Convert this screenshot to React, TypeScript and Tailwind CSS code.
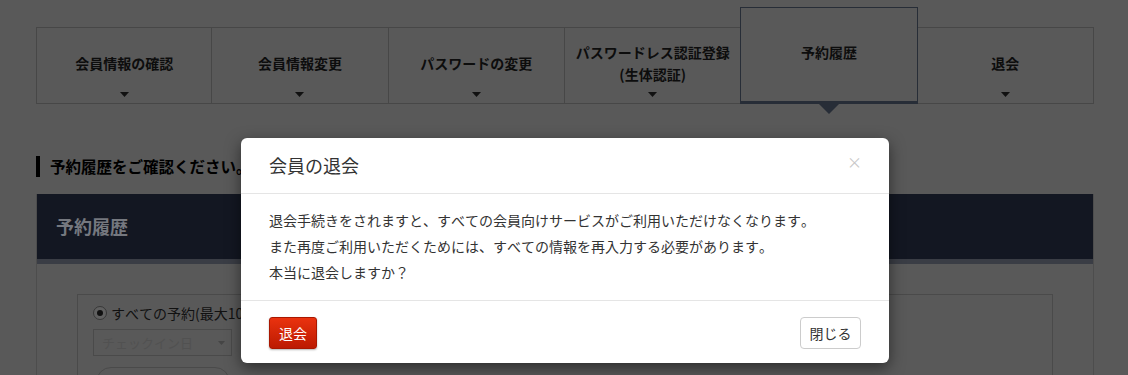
import React from "react";

const tabs = [
  { label: ["会員情報の確認"] },
  { label: ["会員情報変更"] },
  { label: ["パスワードの変更"] },
  { label: ["パスワードレス認証登録", "(生体認証)"] },
  { label: ["予約履歴"], active: true },
  { label: ["退会"] },
];

function Caret() {
  return (
    <svg width="9" height="5" viewBox="0 0 9 5" className="block">
      <path d="M0 0H9L4.5 5Z" fill="#111111" />
    </svg>
  );
}

export default function App() {
  return (
    <div className="relative h-[375px] w-[1128px] overflow-hidden bg-[#595959] font-['Noto_Sans_CJK_JP','Noto_Sans',sans-serif] text-[#111] [font-kerning:none] [text-spacing-trim:space-all]">
      {/* dimmed page */}
      <div className="pl-[36px] pr-[34px] pt-[7px]">
        {/* tabs */}
        <div className="grid h-[97px] grid-cols-6 items-end">
          {tabs.map((t, i) => {
            if (t.active) {
              return (
                <div
                  key={i}
                  className="relative -ml-px flex h-[97px] flex-col items-center border border-b-[3px] border-[#272d37] pt-[33px]"
                >
                  <div className="text-[14px] font-bold leading-[22px] text-[#0d0d0d]">
                    {t.label[0]}
                  </div>
                  <div className="absolute -bottom-[13px] left-1/2 h-0 w-0 -translate-x-1/2 border-x-[10px] border-t-[10px] border-x-transparent border-t-[#272d37]" />
                </div>
              );
            }
            return (
              <div
                key={i}
                className={`flex h-[77px] flex-col items-center border-y border-r border-[#474747] pt-[13px] ${
                  i === 0 ? "border-l" : ""
                }`}
              >
                <div className="flex h-[44px] flex-col items-center justify-center text-center text-[14px] font-bold leading-[22px] text-[#0d0d0d]">
                  {t.label.map((l, k) => (
                    <div key={k}>{l}</div>
                  ))}
                </div>
                <div className="mt-[7px]">
                  <Caret />
                </div>
              </div>
            );
          })}
        </div>

        {/* heading */}
        <div className="mt-[52px] flex items-center gap-[10px]">
          <div className="h-[21px] w-[4px] bg-black" />
          <div className="text-[15.5px] font-bold leading-[21px] text-black">
            予約履歴をご確認ください。
          </div>
        </div>

        {/* panel */}
        <div className="mt-[17px] border-x border-[#4d4d4d]">
          <div className="flex h-[65px] items-center bg-[#131722] pl-[19px]">
            <div className="text-[18px] font-bold text-[#75787f]">予約履歴</div>
          </div>
          <div className="h-[5px] bg-[#3a3d45]" />
          <div className="px-[40px] pt-[30px]">
            <div className="h-[120px] border border-[#4a4a4a] pl-[15px] pt-[8px]">
              <div className="flex items-center gap-[4px]">
                <div className="flex h-[14px] w-[14px] items-center justify-center rounded-full border border-[#383838] bg-[#606060]">
                  <div className="h-[6px] w-[6px] rounded-full bg-[#111]" />
                </div>
                <div className="text-[14px] leading-[20px] text-[#111]">
                  すべての予約(最大100件)
                </div>
              </div>
              <div className="mt-[6px] flex h-[27px] w-[139px] items-center justify-between border border-[#4a4a4a] pl-[8px] pr-[6px]">
                <span className="text-[13px] text-[#515151]">チェックイン日</span>
                <svg width="7" height="4" viewBox="0 0 7 4">
                  <path d="M0 0H7L3.5 4Z" fill="#454545" />
                </svg>
              </div>
              <div className="ml-[3px] mt-[11px] h-[30px] w-[134px] rounded-[15px] border border-[#4a4a4a]" />
            </div>
          </div>
        </div>
      </div>

      {/* modal */}
      <div className="absolute inset-0">
        <div className="ml-[241px] mt-[138px] w-[648px] rounded-[6px] bg-white shadow-[0_5px_15px_rgba(0,0,0,0.5)]">
          <div className="flex h-[56px] items-center justify-between border-b border-[#e5e5e5] pl-[28px] pr-[27px]">
            <div className="text-[18px] leading-[25px] text-[#333]">会員の退会</div>
            <div className="-mt-[8px] text-[15px] leading-[15px] text-[#c8c8c8]">×</div>
          </div>
          <div className="px-[28px] pb-[15px] pt-[13px] text-[14px] leading-[26px] text-[#333]">
            <p>退会手続きをされますと、すべての会員向けサービスがご利用いただけなくなります。</p>
            <p>また再度ご利用いただくためには、すべての情報を再入力する必要があります。</p>
            <p>本当に退会しますか？</p>
          </div>
          <div className="flex items-center justify-between border-t border-[#e5e5e5] pb-[14px] pl-[28px] pr-[28px] pt-[16px]">
            <button className="flex h-[32px] w-[48px] items-center justify-center rounded-[3px] border border-[#a91700] bg-linear-to-b from-[#ea320f] to-[#bc1a02] text-[14px] text-white shadow-[0_1px_2px_rgba(0,0,0,0.3)]">
              退会
            </button>
            <button className="flex h-[32px] w-[61px] items-center justify-center rounded-[4px] border border-[#cccccc] bg-white text-[14px] text-[#333]">
              閉じる
            </button>
          </div>
        </div>
      </div>
    </div>
  );
}
